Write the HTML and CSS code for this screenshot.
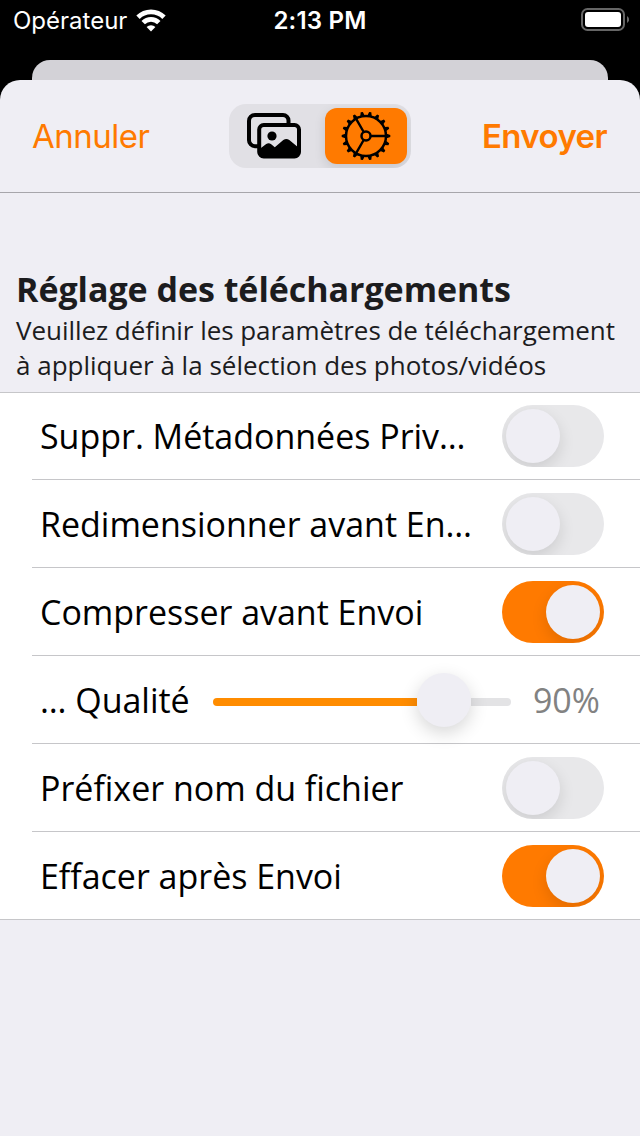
FILE: index.html
```html
<!DOCTYPE html>
<html lang="fr">
<head>
<meta charset="utf-8">
<title>Réglage des téléchargements</title>
<link rel="stylesheet" href="styles.css">
</head>
<body>
<div class="screen">
  <header class="status">
    <div class="carrier"><span class="carrier-name">Opérateur</span>
      <svg class="wifi" width="30" height="23" viewBox="0 0 30 23"><path d="M15 22.4l-4.4-4.4a6.2 6.2 0 0 1 8.8 0z" fill="#fff"/><path d="M7.2 14.2a11 11 0 0 1 15.6 0M2 8.8a18.5 18.5 0 0 1 26 0" transform="translate(0 -.6)" fill="none" stroke="#fff" stroke-width="4.8"/></svg>
    </div>
    <span class="clock">2:13 PM</span>
    <svg class="battery" width="48" height="24" viewBox="0 0 48 24"><rect x="1" y="1" width="42" height="21" rx="5.5" fill="none" stroke="#666" stroke-width="2"/><rect x="4" y="4" width="36" height="15" rx="3" fill="#fff"/><path d="M46 8a4 4 0 0 1 0 7z" fill="#666"/></svg>
  </header>
  <div class="sheet-back"></div>
  <main class="sheet">
    <nav class="navbar">
      <span class="cancel">Annuler</span>
      <div class="segments">
        <div class="segment">
          <svg width="54" height="46" viewBox="0 0 54 46"><path d="M11 33.2H8a6 6 0 0 1-6-6V8a6 6 0 0 1 6-6h28a5.5 5.5 0 0 1 5.5 5.5V11" fill="none" stroke="#000" stroke-width="4"/><rect x="12.2" y="12" width="39.8" height="31.5" rx="4.5" fill="none" stroke="#000" stroke-width="4"/><circle cx="25" cy="23" r="4.6"/><path d="M12 36.5l7.2-5.5q2.5-1.8 5 .2l3.6 3 8.5-7.2q3-2.2 6 0L52 35v8H12z"/></svg>
        </div>
        <div class="segment selected">
          <svg width="50" height="50" viewBox="-25 -25 50 50" fill="none" stroke="#000">
            <circle r="20" stroke-width="2.5"/><circle r="4.5" stroke-width="2.5"/>
            <path d="M4.5 0H20M-2.3-4L-10-17.3M-2.3 4L-10 17.3" stroke-width="2.4"/>
            <g fill="#000" stroke="none">
              <g id="six"><g id="three"><path id="tooth" d="M20-2.4L24.3-1.1V1.1L20 2.4z"/><use href="#tooth" transform="rotate(20)"/><use href="#tooth" transform="rotate(40)"/></g><use href="#three" transform="rotate(60)"/></g>
              <use href="#six" transform="rotate(120)"/><use href="#six" transform="rotate(240)"/>
            </g>
          </svg>
        </div>
      </div>
      <span class="send">Envoyer</span>
    </nav>
    <section class="intro">
      <h1 class="title">Réglage des téléchargements</h1>
      <p class="subtitle"><span class="tight">Veuillez définir les paramètres de téléchargement</span><br>à appliquer à la sélection des photos/vidéos</p>
    </section>
    <section class="list">
      <div class="row"><span class="label">Suppr. Métadonnées Priv…</span><span class="switch"><i class="knob"></i></span></div>
      <div class="row"><span class="label">Redimensionner avant En…</span><span class="switch"><i class="knob"></i></span></div>
      <div class="row"><span class="label">Compresser avant Envoi</span><span class="switch on"><i class="knob"></i></span></div>
      <div class="row slider-row"><span class="label">… Qualité</span><span class="slider"><i class="fill"></i><i class="knob thumb"></i><i class="rest"></i></span><span class="value">90%</span></div>
      <div class="row"><span class="label">Préfixer nom du fichier</span><span class="switch"><i class="knob"></i></span></div>
      <div class="row"><span class="label">Effacer après Envoi</span><span class="switch on"><i class="knob"></i></span></div>
    </section>
  </main>
</div>
</body>
</html>
```
FILE: styles.css
```css
* { box-sizing: border-box; }
body { margin: 0; background: #000; }
svg { display: block; flex: none; }
.screen { width: 640px; height: 1136px; display: flex; flex-direction: column; overflow: hidden; background: #000; font-family: "Open Sans", "Noto Sans", sans-serif; }
.status { height: 60px; flex: none; display: grid; grid-template-columns: 1fr auto 1fr; align-items: start; padding: 1px 11px 0 13px; color: #fff; font: 24px/40px Inter, sans-serif; }
.carrier { display: flex; }
.carrier-name { width: 123px; white-space: nowrap; }
.wifi { margin-top: 8px; }
.clock { font-weight: 600; letter-spacing: 0.2px; margin-right: 2px; }
.battery { justify-self: end; margin-top: 7px; }
.sheet-back { height: 20px; flex: none; margin: 0 32px; background: #d3d2d7; border-radius: 18px 18px 0 0; }
.sheet { flex: 1; background: #efeef4; border-radius: 20px 20px 0 0; }
.navbar { height: 113px; border-bottom: 1px solid #a7a6ab; display: grid; grid-template-columns: 1fr 182px 1fr; align-items: center; padding: 0 32px; color: #ff7a00; font: 33px/40px Inter, sans-serif; }
.cancel { letter-spacing: -0.5px; padding-bottom: 1px; }
.send { justify-self: end; font-weight: 600; letter-spacing: -0.6px; padding: 0 1px 1px 0; }
.segments { height: 64px; padding: 4px; display: grid; grid-template-columns: 92px 82px; background: #e1e0e5; border-radius: 17px; overflow: hidden; }
.segment { display: flex; align-items: center; padding-left: 14px; }
.selected { padding-left: 16px; background: #ff7a00; border-radius: 12px; box-shadow: 0 4px 12px rgba(0,0,0,.12); }
.intro { height: 199px; padding: 72px 0 0 16px; color: #1c1c1e; white-space: nowrap; }
.title { margin: 0; font-size: 34px; line-height: 48px; font-weight: 700; letter-spacing: -0.04px; }
.subtitle { margin: 0; font-size: 26px; line-height: 35px; }
.tight { letter-spacing: -0.05px; }
.list { background: #fff; border-top: 1px solid #c6c6c9; border-bottom: 1px solid #c6c6c9; }
.row { height: 88px; margin-left: 32px; padding: 1px 36px 0 8px; display: flex; align-items: center; justify-content: space-between; border-bottom: 1px solid #c6c6c9; font-size: 34px; line-height: 46px; color: #000; }
.row:first-child { height: 87px; padding: 0 36px 1px 8px; }
.row:first-child .label { padding-top: 1px; }
.row:last-child { height: 87px; border-bottom: 0; }
.label { white-space: nowrap; letter-spacing: -0.02px; }
.switch { width: 102px; height: 62px; padding: 4px; border-radius: 31px; background: #e8e8ea; display: flex; overflow: hidden; }
.switch.on { background: #ff7a00; justify-content: flex-end; }
.knob { width: 54px; height: 54px; flex: none; border-radius: 50%; background: #efeef4; box-shadow: 0 6px 16px rgba(0,0,0,.12); }
.slider-row { justify-content: flex-start; }
.slider-row .label { width: 173px; }
.slider { width: 298px; flex: none; display: flex; align-items: center; }
.fill { width: 204px; height: 8px; border-radius: 4px 0 0 4px; background: #ff8c00; margin-top: 4px; }
.thumb { position: relative; box-shadow: 0 6px 18px rgba(0,0,0,.16); }
.rest { flex: 1; height: 8px; background: #e3e3e5; border-radius: 0 4px 4px 0; margin-top: 4px; }
.value { margin-left: 22px; color: #828282; letter-spacing: -0.1px; }
```
